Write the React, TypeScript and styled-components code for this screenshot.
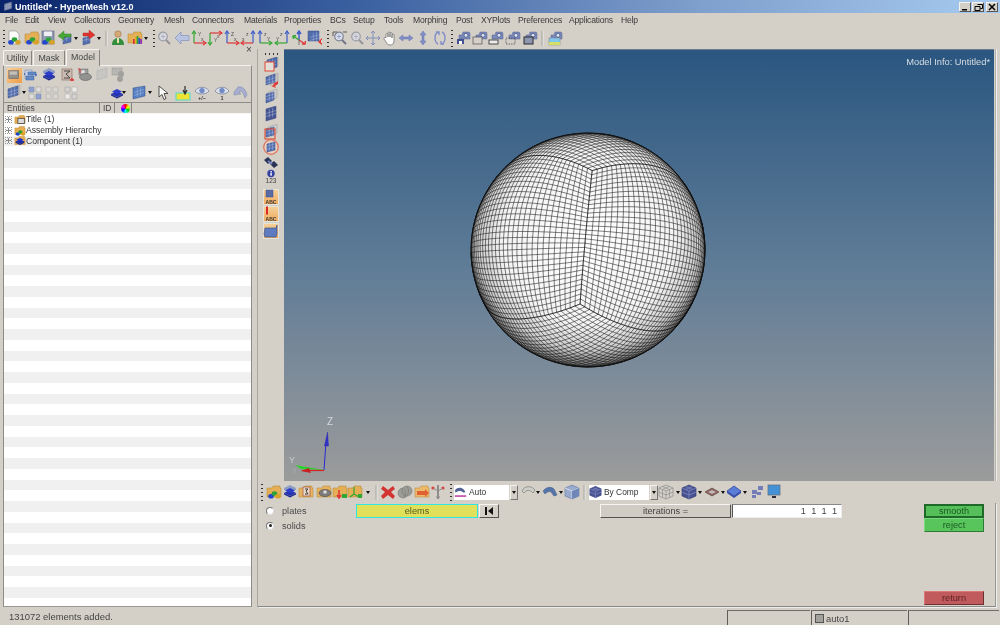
import React, { useMemo } from 'react';
import styled, { createGlobalStyle, css } from 'styled-components';

const Global = createGlobalStyle`
  html, body { margin: 0; padding: 0; background: #d4d0c8; }
  #root { width: 1000px; height: 625px; overflow: hidden; }
`;

const FONT = `"Liberation Sans", Arial, sans-serif`;

const Frame = styled.div`
  width: 1000px; height: 625px; display: flex; flex-direction: column;
  background: #d4d0c8; font-family: ${FONT}; color: #3a3a3a; overflow: hidden;
  filter: blur(0.3px);
`;
const TitleBar = styled.div`
  height: 13px; flex: none; display: flex; align-items: center; padding: 0 2px 0 2px;
  background: linear-gradient(90deg, #0a246a 0%, #3a5f9f 35%, #7f9fcc 70%, #a6caf0 100%);
`;
const TitleText = styled.span`
  color: #fff; font-weight: 700; font-size: 9px; margin-left: 1px; white-space: nowrap; flex: 1;
`;
const WinBtns = styled.div`display: flex; gap: 1px;`;
const WinBtn = styled.div<{ $gap?: number }>`
  width: 12px; height: 10px; margin-left: ${p => p.$gap ?? 0}px; background: #d4d0c8; box-sizing: border-box;
  border: 1px solid; border-color: #f4f2ee #555 #555 #f4f2ee; display: flex; align-items: center; justify-content: center;
  svg { display: block; }
`;
const MenuBar = styled.div`height: 14px; flex: none; display: flex; align-items: center; padding-left: 5px;`;
const MenuItem = styled.span<{ $w: number }>`
  flex: none; width: ${p => p.$w}px; font-size: 8.6px; letter-spacing: -0.2px; white-space: nowrap;
`;
const TopTools = styled.div`height: 22px; flex: none; display: flex; align-items: center;`;
const StripBox = styled.div<{ $pad: number }>`
  display: flex; height: 100%; flex: none; padding-left: ${p => p.$pad}px; align-items: center;
`;
const Slot = styled.span<{ $w: number }>`
  flex: none; width: ${p => p.$w}px; height: 100%; display: flex; align-items: center;
  & > * { flex: none; transform: translateX(-50%); }
`;
const Ico = styled.svg`width: 16px; height: 16px; display: block; opacity: 0.94;`;
const Drop = styled.i`
  width: 0; height: 0; border-left: 2px solid transparent; border-right: 2px solid transparent; border-top: 3px solid #111;
`;
const Grip = styled.i`
  width: 2px; height: 17px; background: repeating-linear-gradient(180deg, #333 0 1.5px, transparent 1.5px 4px);
`;
const Sep = styled.i`width: 1px; height: 15px; background: #a8a59e; box-shadow: 1px 0 0 #eee;`;

const Main = styled.div`flex: 1; display: flex; min-height: 0;`;
const LeftCol = styled.div`width: 257px; flex: none; display: flex; flex-direction: column; position: relative;`;
const CloseX = styled.span`position: absolute; left: 246px; top: -5px; font-size: 10px; color: #444; line-height: 12px;`;
const TabRow = styled.div`height: 16px; flex: none; display: flex; align-items: flex-end; padding-left: 3px; gap: 1px;`;
const Tab = styled.div<{ $w: number; $on?: boolean }>`
  width: ${p => p.$w}px; box-sizing: border-box; height: ${p => (p.$on ? 16 : 15)}px; flex: none;
  border: 1px solid #f6f5f1; border-bottom: 0; border-right-color: #86847e; border-radius: 2px 2px 0 0;
  font-size: 8.8px; text-align: center; line-height: 15px; color: #444;
  ${p => p.$on && css`margin-bottom: -1px; height: 17px; background: #d4d0c8; position: relative;`}
`;
const TabBody = styled.div`
  flex: 1; min-height: 0; width: 249px; margin-left: 3px; box-sizing: border-box; display: flex; flex-direction: column;
  border: 1px solid; border-color: #f4f2ee #8e8c86 #9a9892 #8e8c86;
`;
const ToolRow = styled.div<{ $h: number }>`height: ${p => p.$h}px; flex: none; display: flex; align-items: center;`;
const Hot = styled.span`
  width: 15px; height: 15px; background: linear-gradient(135deg, #f9d39b, #ef9b45); display: flex; align-items: center; justify-content: center;
  svg { width: 13px; height: 13px; }
`;
const HeadRow = styled.div`
  height: 12px; flex: none; display: flex; margin-top: 1px; border-top: 1px solid #8e8c86; border-bottom: 1px solid #f7f6f3; box-sizing: border-box;
`;
const HeadCell = styled.div<{ $w: number; $last?: boolean }>`
  width: ${p => p.$w}px; ${p => p.$last && 'flex: 1;'} box-sizing: border-box; border-right: 1px solid ${p => (p.$last ? 'transparent' : '#85837d')};
  font-size: 8.5px; line-height: 10px; padding-left: 3px; color: #444; display: flex; align-items: center;
`;
const Wheel = styled.i`
  width: 9px; height: 9px; border-radius: 50%; margin-left: 3px;
  background: conic-gradient(#f00, #ff0, #0c0, #0ff, #00f, #f0f, #f00);
`;
const Tree = styled.div`flex: 1; min-height: 0; overflow: hidden;`;
const TreeRow = styled.div<{ $alt: boolean }>`
  height: 10.75px; display: flex; align-items: center; padding-left: 1px; background: ${p => (p.$alt ? '#f0f0f0' : '#fff')};
  font-size: 8.6px; color: #333; white-space: nowrap; letter-spacing: -0.05px;
`;
const Expand = styled.i`
  width: 5px; height: 5px; border: 1px dotted #999; margin-right: 2px; position: relative; flex: none;
  &::before { content: ''; position: absolute; left: 0; right: 0; top: 2px; height: 1px; background: #888; }
  &::after { content: ''; position: absolute; top: 0; bottom: 0; left: 2px; width: 1px; background: #888; }
`;
const TreeIco = styled.svg`width: 12px; height: 11px; flex: none;`;

const RightCol = styled.div`flex: 1; min-width: 0; display: flex; flex-direction: column; border-left: 1px solid #aaa7a0;`;
const ViewRow = styled.div`height: 432px; flex: none; display: flex;`;
const VBar = styled.div<{ $pad: number }>`width: 26px; flex: none; display: flex; flex-direction: column; align-items: center; padding-top: ${p => p.$pad}px; box-sizing: border-box;`;
const VSlot = styled.span<{ $h: number }>`
  flex: none; height: ${p => p.$h}px; display: flex; justify-content: center;
  & > * { flex: none; transform: translateY(-50%); }
`;
const HDots = styled.i`width: 13px; height: 2px; background: repeating-linear-gradient(90deg, #333 0 1.5px, transparent 1.5px 4px);`;
const Tile = styled.span`
  width: 16px; height: 16px; background: linear-gradient(180deg, #f6d29c, #efa95a); display: block; box-shadow: inset 0 0 0 1px #e8e4da;
  svg { width: 16px; height: 16px; }
`;
const Viewport = styled.div`
  width: 710px; flex: none; position: relative; box-sizing: border-box; border-top: 1px solid #6d7f8f;
  background: linear-gradient(180deg, #2a5680 0%, #5f7c97 50%, #9b9b9b 100%);
`;
const ModelInfo = styled.span`
  position: absolute; right: 4px; top: 7px; font-size: 9.3px; color: #d6dde3;
`;
const SphereSvg = styled.svg`position: absolute; left: 184px; top: 80px; width: 240px; height: 240px;`;
const TriadSvg = styled.svg`position: absolute; left: 4px; top: 364px; width: 50px; height: 66px;`;
const EdgeLine = styled.div`width: 1px; margin-left: 1px; background: #b5b2ab; box-shadow: 1px 0 0 #eee;`;

const BottomTools = styled.div`height: 22px; flex: none; display: flex; align-items: center;`;
const Combo = styled.div<{ $w: number }>`
  flex: none; width: ${p => p.$w}px; height: 15px; display: flex; align-items: center;
`;
const ComboField = styled.div`
  flex: 1; height: 100%; background: #fff; display: flex; align-items: center; gap: 2px; font-size: 8.4px; color: #333;
  svg { width: 13px; height: 14px; }
`;
const ComboArrow = styled.div`
  width: 8px; height: 100%; display: flex; align-items: center; justify-content: center; margin-left: 1px;
  border: 1px solid; box-sizing: border-box; border-color: #f4f2ee #777 #777 #f4f2ee;
`;
const Panel = styled.div`
  flex: 1; min-height: 0; margin: 0 4px 0 0; display: flex; padding-top: 1px; box-sizing: border-box;
  border-right: 1px solid #9a9892; border-bottom: 1px solid #8a8882; box-shadow: 1px 1px 0 #eee;
`;
const RadioCol = styled.div`width: 98px; flex: none; display: flex; flex-direction: column; padding: 1px 0 0 8px; box-sizing: border-box; gap: 2.5px;`;
const RadioRow = styled.label`display: flex; align-items: center; height: 12px; gap: 8px; font-size: 9.2px; color: #4a4a4a;`;
const Dot = styled.i<{ $on?: boolean }>`
  width: 6px; height: 6px; border-radius: 50%; background: #fff; border: 1px solid; border-color: #777 #ddd #ddd #777; display: flex; align-items: center; justify-content: center;
  ${p => p.$on && css`&::after { content: ''; width: 3px; height: 3px; border-radius: 50%; background: #222; }`}
`;
const Bevel = css`
  height: 14px; box-sizing: border-box; border: 1px solid; border-color: #f6f5f1 #55534f #55534f #f6f5f1;
  display: flex; align-items: center; justify-content: center; font-size: 9.2px; color: #444;
`;
const ElemsBtn = styled.div`
  width: 122px; height: 14px; flex: none; box-sizing: border-box; border: 1px solid #2fe6e2; background: #e0e05a;
  display: flex; align-items: center; justify-content: center; font-size: 9.2px; color: #555a20;
`;
const FirstBtn = styled.div`${Bevel}; width: 20px; flex: none; margin-left: 1px; margin-right: 101px;`;
const IterBtn = styled.div`${Bevel}; width: 131px; flex: none; background: #d0ccc4;`;
const ValueField = styled.div`
  width: 110px; height: 14px; flex: none; margin-left: 1px; box-sizing: border-box; background: #fff; border: 1px solid #eee; border-left-color: #555; border-top-color: #888;
  display: flex; align-items: center; justify-content: flex-end; padding-right: 4px; font-size: 9.2px; color: #444; word-spacing: 2.7px;
`;
const ActionCol = styled.div`width: 60px; flex: none; margin-left: 82px; display: flex; flex-direction: column;`;
const Action = styled.div<{ $tone: 'on' | 'off' | 'red'; $push?: boolean }>`
  height: 14px; box-sizing: border-box; display: flex; align-items: center; justify-content: center; font-size: 9.2px;
  ${p => p.$push && 'margin-top: auto; margin-bottom: 1px;'}
  ${p => p.$tone === 'red' && 'background: #c05a5c; color: #5a2226; border: 1px solid; border-color: #d77 #6d3033 #6d3033 #d77;'}
  ${p => p.$tone === 'off' && 'background: #58c45c; color: #1d5a24; border: 1px solid; border-color: #7ad97e #2f7a35 #2f7a35 #7ad97e;'}
  ${p => p.$tone === 'on' && 'background: #55c05a; color: #1b5a22; border: 2px solid #1f6a28; margin-bottom: 0;'}
`;
const Status = styled.div`height: 18px; flex: none; display: flex; align-items: flex-end;`;
const StatusMsg = styled.div`flex: 1; align-self: center; padding-left: 9px; font-size: 9.45px; color: #444;`;
const StatusCell = styled.div<{ $w: number }>`
  width: ${p => p.$w}px; height: 15px; flex: none; box-sizing: border-box; border-left: 1px solid #5f5d58; border-top: 1px solid #6f6d68; margin-right: 1px;
  display: flex; align-items: center; gap: 2px; padding-left: 3px; font-size: 9.4px; color: #444;
`;
const Swatch = styled.i`width: 7px; height: 7px; background: #a3a19c; border: 1px solid #555;`;

/* ---------- drawings ---------- */
const GN = '#2aa52c', RD = '#e03030', BL = '#3355c8', MB = '#4a67ad';

const Balls = () => (
  <g>
    <ellipse cx="5" cy="12.3" rx="2.8" ry="2.3" fill="#1b3fd0" />
    <ellipse cx="8.5" cy="9.5" rx="2.8" ry="2.3" fill="#20a030" />
    <ellipse cx="12" cy="12.3" rx="2.8" ry="2.3" fill="#d8a020" />
  </g>
);
const Folder = ({ c = '#e6ad4e' }: { c?: string }) => (
  <path d="M1 4h5l1-2h7v2h1v9H1z" fill={c} stroke="#b98b3a" strokeWidth=".6" />
);
const MeshP = ({ d = 'M3 4l10-3v9L3 13z', f = MB, back = false }: { d?: string; f?: string; back?: boolean }) => (
  <g>
    {back && <path d="M6 3l9-3v9l-9 3z" fill="#c5c3bf" stroke="#999" strokeWidth=".5" />}
    <path d={d} fill={f} stroke="#33477e" strokeWidth=".5" />
    <path d="M6.3 3v9M9.6 2v9M3 7.5l10-3M3 10.5l10-3" stroke="#a9b8dc" strokeWidth=".5" fill="none" />
  </g>
);
const Disc = ({ c = '#2233cc' }: { c?: string }) => (
  <g>
    <path d="M8 6l6 3-6 3-6-3z" fill="#1a2bb0" />
    <path d="M2 9v1.5l6 3 6-3V9l-6 3z" fill="#101f8a" />
    <path d="M8 4l5 2.6-5 2.6L3 6.6z" fill={c} />
  </g>
);
const Mag = () => (
  <g>
    <circle cx="7" cy="6.5" r="4.3" fill="#d8deea" stroke="#7a7f92" strokeWidth="1.2" />
    <path d="M10 10l4 4" stroke="#6b6f80" strokeWidth="2" />
    <path d="M5 6.5h4M7 4.5v4" stroke="#8a93c0" strokeWidth=".8" />
  </g>
);
const Axis = ({ vc, hc, vx = 3, hy = 13, vUp = true, hRight = true, lv, lh }: {
  vc: string; hc: string; vx?: number; hy?: number; vUp?: boolean; hRight?: boolean; lv: string; lh: string;
}) => {
  const vEnd = vUp ? 1 : 15;
  const hEnd = hRight ? 15 : 1;
  const hStart = vx === 3 ? 3 : 13;
  return (
    <g fill="none" strokeWidth="1.2">
      <path d={`M${vx} ${hy}V${vEnd}`} stroke={vc} />
      <path d={`M${vx - 2} ${vEnd + (vUp ? 3 : -3)}L${vx} ${vEnd}l2 ${vUp ? 3 : -3}`} stroke={vc} />
      <path d={`M${hStart} ${hy}H${hEnd}`} stroke={hc} />
      <path d={`M${hEnd + (hRight ? -3 : 3)} ${hy - 2}L${hEnd} ${hy}l${hRight ? -3 : 3} 2`} stroke={hc} />
      <text x={vx === 3 ? 7 : 6} y={hy > 8 ? 6 : 12} fontSize="5" fill="#444" stroke="none" fontFamily={FONT}>{lv}</text>
      <text x={vx === 3 ? 10 : 2} y={hy > 8 ? 11 : 8} fontSize="5" fill="#444" stroke="none" fontFamily={FONT}>{lh}</text>
    </g>
  );
};
const Cam = ({ children }: { children?: React.ReactNode }) => (
  <g>
    <path d="M4 5h3l1-3h6l1 1v6H4z" fill="#7484b8" stroke="#4e5c8e" strokeWidth=".5" />
    <circle cx="11" cy="5.3" r="1.9" fill="#dfe6f6" stroke="#3e4c80" strokeWidth=".7" />
    {children}
  </g>
);
const Eye = ({ label }: { label: string }) => (
  <g>
    <path d="M1 6c3-5 11-5 14 0-3 4-11 4-14 0z" fill="#dfe4ee" stroke="#6a7390" strokeWidth=".7" />
    <circle cx="8" cy="5.6" r="2.7" fill="#6c87c6" />
    <text x="8" y="14.5" textAnchor="middle" fontSize="5.5" fontFamily={FONT} fontWeight="700" fill="#333">{label}</text>
  </g>
);

const ICONS: Record<string, React.ReactNode> = {
  new: <g><path d="M3 1h7l3 3v10H3z" fill="#fff" stroke="#8a8a8a" strokeWidth=".6" /><Balls /></g>,
  folder: <g><Folder /><Balls /></g>,
  save: <g><rect x="2" y="1" width="12" height="13" fill="#8c96b0" stroke="#505a78" strokeWidth=".6" /><rect x="4" y="1.5" width="8" height="4.5" fill="#eef0f5" /><Balls /></g>,
  arrowG: <g><MeshP d="M6 6l8-2v8l-8 2z" /><path d="M1 6l6-5v3h7v3H7v3z" fill="#3ea52c" stroke="#256c1c" strokeWidth=".4" /></g>,
  arrowR: <g><MeshP d="M3 8l7-2v7l-7 2z" /><path d="M15 5L9 0v3H3v3h6v3z" fill="#e22a26" stroke="#9c1816" strokeWidth=".4" /></g>,
  user: <g><circle cx="8" cy="4" r="3.2" fill="#d8a870" stroke="#87623a" strokeWidth=".5" /><path d="M2 15c0-5 3-7 6-7s6 2 6 7z" fill="#2c8a36" /><path d="M7 8h2v5H7z" fill="#e9e3b0" /></g>,
  rainbow: <g><Folder /><path d="M6 14V9h1.8v5z" fill="#e02828" /><path d="M7.8 14V7H9.6v7z" fill="#e0b020" /><path d="M9.6 14V6h1.8v8z" fill="#22a030" /><path d="M11.4 14V8h1.8v6z" fill="#2244cc" /><path d="M13.2 14V9h1.8v5z" fill="#9030b0" /></g>,
  mag: <Mag />,
  magDim: <g opacity=".65"><Mag /></g>,
  magBox: <g><path d="M1 2h4M1 2v4M15 2h-4" stroke="#555" fill="none" /><Mag /></g>,
  left: <path d="M1 8l6-6v3.5h8v5H7V14z" fill="#b8c4e4" stroke="#7e8ebc" strokeWidth=".7" />,
  ax1: <Axis vc={GN} hc={RD} lv="Y" lh="x" />,
  ax2: <Axis vc={GN} hc={RD} hy={3} vUp={false} lv="Y" lh="x" />,
  ax3: <Axis vc={BL} hc={RD} lv="Z" lh="x" />,
  ax4: <Axis vc={BL} hc={RD} vx={13} hRight={false} lv="z" lh="x" />,
  ax5: <Axis vc={BL} hc={GN} lv="z" lh="Y" />,
  ax6: <Axis vc={BL} hc={GN} vx={13} hRight={false} lv="z" lh="Y" />,
  ax7: (
    <g fill="none" strokeWidth="1.4">
      <path d="M8 10V1M6 4l2-3 2 3" stroke={BL} />
      <path d="M8 10l-6-4M2.4 9L2 6l3-.5" stroke={GN} />
      <path d="M8 10l6 4M14.5 11l-.5 3-3 0" stroke={RD} />
      <path d="M8 10v5" stroke="#555" strokeWidth=".8" />
    </g>
  ),
  viewMesh: <g><MeshP d="M1 1h11v10H1z" /><path d="M15 8l-4 4 4 3v-2h-1v-3h1z" fill={RD} /></g>,
  cross: <path d="M8 1v14M1 8h14M6 3l2-2 2 2M6 13l2 2 2-2M3 6L1 8l2 2M13 6l2 2-2 2" fill="none" stroke="#7f8abc" strokeWidth="1" />,
  hand: <path d="M4 8V4.500a1 1 0 012 0V7 3a1 1 0 012 0v4-3.500a1 1 0 012 0V8 5a1 1 0 012 0v6c0 3-2 4-4 4s-3-1-4-3L2 9a1 1 0 012-1z" fill="#fff" stroke="#6e6e6e" strokeWidth=".8" />,
  horiz: <path d="M1 8l4-3v2h6V5l4 3-4 3V9H5v2z" fill="#7c8ac8" stroke="#5f6cae" strokeWidth=".5" />,
  vert: <path d="M8 1l3 4H9v6h2l-3 4-3-4h2V5H5z" fill="#7c8ac8" stroke="#5f6cae" strokeWidth=".5" />,
  rotate: <path d="M6 2C2 4 2 12 6 14M10 2c4 2 4 10 0 12M4 2h3v3M12 14H9v-3" fill="none" stroke="#7c8ac8" strokeWidth="1.4" />,
  cam1: <Cam><rect x="2" y="9" width="7" height="5" fill="#3a4a8c" /><rect x="4" y="11" width="3" height="3" fill="#fff" /></Cam>,
  cam2: <Cam><rect x="1" y="7" width="9" height="7" fill="#d4d0c8" stroke="#4a4a4a" strokeWidth=".7" /></Cam>,
  cam3: <Cam><rect x="1" y="10" width="9" height="4" fill="#eee" stroke="#333" strokeWidth=".9" /></Cam>,
  cam4: <Cam><rect x="1" y="8" width="9" height="6" fill="none" stroke="#333" strokeWidth=".7" strokeDasharray="1.5 1" /></Cam>,
  cam5: <Cam><rect x="2" y="7" width="9" height="7" fill="#8a93b0" stroke="#222" strokeWidth="1" /></Cam>,
  camImg: <Cam><rect x="2" y="8" width="11" height="7" fill="#7ec8f0" stroke="#777" strokeWidth=".5" /><rect x="2" y="12" width="11" height="3" fill="#d4e060" /></Cam>,
  panelHot: <g><rect x="1" y="2" width="12" height="10" fill="#8e8e8e" stroke="#555" strokeWidth=".6" /><rect x="2" y="3" width="9" height="4" fill="#c0c0c0" /></g>,
  assy: <g><rect x="2" y="3" width="7" height="9" fill="#c5d0e6" stroke="#7888aa" strokeWidth=".6" /><path d="M5 5h8v3H5zM3 9h8v4H3z" fill="#5b86c6" stroke="#3a5aa0" strokeWidth=".5" /><path d="M12 7l2 1-2 1M2 6l-1 1 1 1" stroke="#3a6ac0" fill="none" /></g>,
  comp: <g><path d="M8 1l6 3v2H2V4z" fill="#8a9ac4" /><Disc /></g>,
  title2: <g><rect x="3" y="2" width="10" height="11" fill="#c8b8b0" stroke="#8a6050" strokeWidth=".6" /><path d="M5 4h6l-4 3 4 4H5" fill="none" stroke="#333" strokeWidth=".9" /><path d="M13 11v3M11 13h4" stroke={RD} strokeWidth="1.4" /></g>,
  stack: <g><rect x="2" y="2" width="9" height="6" fill="#9a9a9a" stroke="#666" strokeWidth=".5" /><circle cx="6" cy="5" r="2" fill="#ddd" /><ellipse cx="8.500" cy="10" rx="6" ry="3.500" fill="#8f8f8f" stroke="#555" strokeWidth=".6" /><path d="M1 2h2v4" stroke={RD} fill="none" /></g>,
  dimMesh: <g opacity=".3"><MeshP f="#aaa" /></g>,
  stackDim: <g opacity=".7"><rect x="2" y="1" width="10" height="7" fill="#aaa" stroke="#777" strokeWidth=".5" /><circle cx="11" cy="7" r="3" fill="#888" /><circle cx="10" cy="12" r="3" fill="#888" /></g>,
  meshBack: <MeshP back />,
  frame1: <g opacity=".5"><path d="M2 2h5v5H2zM9 2h5v5H9zM2 9h5v5H2zM9 9h5v5H9z" fill="#ddd" stroke="#888" strokeWidth=".6" /></g>,
  frame2: <g opacity=".85"><path d="M2 2h5v5H2zM9 9h5v5H9z" fill="#8097d0" stroke="#5a70a8" strokeWidth=".5" /><path d="M9 2h5v5H9zM2 9h5v5H2z" fill="#e2e2e2" stroke="#888" strokeWidth=".5" /></g>,
  frame3: <g opacity=".8"><path d="M2 2h5v5H2zM9 9h5v5H9z" fill="#d2d2d2" stroke="#888" strokeWidth=".5" /><path d="M9 2h5v5H9zM2 9h5v5H2z" fill="#f2f2f2" stroke="#999" strokeWidth=".5" /></g>,
  disc: <Disc />,
  mesh: <MeshP d="M2 3l12-2v10L2 14z" f="#4c79c2" />,
  cursor: <path d="M4 1v11l3-2.500 2 5 2-1-2-5h4z" fill="#fff" stroke="#333" strokeWidth=".9" />,
  yellow: <g><rect x="1" y="8" width="14" height="7" fill="#efe62a" stroke="#45d8d4" strokeWidth="1" /><path d="M10 1v8M8 5l2 4 2-4" stroke="#222" fill="none" strokeWidth="1.2" /></g>,
  eyePM: <Eye label="+/−" />,
  eye1: <Eye label="1" />,
  undo: <path d="M2 7l4-5c5-1 8 3 9 8l-2 3-2-5c-1-2-3-2-4-1l2 2-7 1z" fill="#a4abd0" stroke="#7880a8" strokeWidth=".5" />,
  v1: <g><MeshP back d="M4 3l10-3v10L4 13z" /><rect x="2" y="5" width="9" height="9" fill="#e4e0d8" stroke="#e0432a" strokeWidth="1" /></g>,
  v2: <g><MeshP back d="M3 4l9-3v8l-9 3z" /><path d="M15 8l-5 3 1 1-3 1 5 2-1-2 3-2z" fill={RD} /></g>,
  v3: <g><path d="M5 3l9-3v9L5 12z" fill="#ccc" stroke="#999" strokeWidth=".5" /><MeshP d="M3 5l8-2v8l-8 3z" /></g>,
  v4: <MeshP back={false} d="M3 3l10-3v12L3 15z" f="#3d4d8e" />,
  v5: <g><path d="M5 3l9-3v9L5 12z" fill="#ccc" stroke="#999" strokeWidth=".5" /><MeshP d="M3 5l8-2v8l-8 2z" /><rect x="2" y="5" width="10" height="10" fill="none" stroke="#e0432a" strokeWidth="1.1" /></g>,
  v6: <g><circle cx="8" cy="8" r="7.300" fill="#e8d0c4" stroke="#e06a50" strokeWidth="1.2" /><MeshP d="M4 5l8-2v8l-8 2z" /></g>,
  bino: <g><path d="M1 5l4-3 4 4-4 3zM7 9l4-3 4 4-4 3z" fill="#1f2a52" /><path d="M5 6l4 3" stroke="#6b7bb6" strokeWidth="2" /></g>,
  tabc: <g><rect x="3" y="1" width="7" height="7" fill="#4f66a8" stroke="#334a90" strokeWidth=".5" /><text x="8" y="14.500" textAnchor="middle" fontSize="5" fontWeight="700" fontFamily={FONT} fill="#333">ABC</text></g>,
  tabc2: <g><rect x="3" y="0.500" width="2" height="8" fill="#d92020" /><text x="8" y="14.500" textAnchor="middle" fontSize="5" fontWeight="700" fontFamily={FONT} fill="#333">ABC</text></g>,
  tbox: <path d="M2 5h11l1-3v9l-1 3H2l-1-3z" fill="#5578c4" stroke="#35508e" strokeWidth=".7" />,
  tri: <g><Folder /><path d="M7 3v7l5 3M7 10l-4 3" stroke={GN} strokeWidth="1.2" fill="none" /><rect x="11" y="10" width="4" height="4" fill={GN} /></g>,
  folderT: <g><Folder c="#eab25a" /><rect x="5" y="3" width="7" height="9" fill="#e8d8c8" stroke="#a04a3a" strokeWidth=".7" /><path d="M7 5h3l-2 2 2 3H7" fill="none" stroke="#333" /></g>,
  folderS: <g><Folder c="#eab25a" /><ellipse cx="9" cy="9" rx="6" ry="3.600" fill="#777" stroke="#333" strokeWidth=".5" /><circle cx="9" cy="8" r="1.800" fill="#ddd" /></g>,
  folderR: <g><Folder /><path d="M7 6v7M5 11l2 3 2-3" stroke={RD} strokeWidth="1.6" fill="none" /><rect x="10" y="10" width="5" height="4" fill={GN} /></g>,
  x: <path d="M3 2l5 4 5-4 2 3-4 3 4 4-2 3-5-4-5 4-2-3 4-4-4-3z" fill="#d32a2a" />,
  gears: <g fill="#9a9a96" stroke="#6e6e6a" strokeWidth=".6"><ellipse cx="6" cy="9" rx="5" ry="5" /><ellipse cx="10" cy="7" rx="5" ry="5" /><path d="M7 5c2 2 2 6 0 8M10 3c2 2 2 6 0 8" fill="none" /></g>,
  folderF: <g><Folder c="#efb866" /><path d="M3 7h8v-2l4 4-4 4v-2H3z" fill="#e05a28" /></g>,
  split: <g><path d="M8 1v14" stroke="#444" strokeWidth="1" /><circle cx="3" cy="4" r="1.600" fill={RD} /><circle cx="13" cy="4" r="1.600" fill={RD} /><path d="M3 4l5 3 5-3M6 13h4" stroke="#888" fill="none" /></g>,
  bolt: <g><path d="M2 7c2-5 9-6 13-1l-2 3c-3-4-7-3-9 0z" fill="#d0d0cc" stroke="#777" strokeWidth=".7" /></g>,
  bolt2: <g><path d="M1 7c3-4 8-5 11-2l3 6-3 1-3-4c-2-1-4 0-6 2z" fill="#4d6fa8" stroke="#34507e" strokeWidth=".5" /></g>,
  box: <g><path d="M8 1l7 3v8l-7 3-7-3V4z" fill="#95a8ce" stroke="#60709c" strokeWidth=".6" /><path d="M1 4l7 3 7-3M8 7v8" stroke="#e8ecf6" fill="none" strokeWidth=".8" /><path d="M8 7l7-3v8l-7 3z" fill="#6882b8" /></g>,
  wire: <g fill="none" stroke="#8a8a8a" strokeWidth=".7"><path d="M8 1l7 3v8l-7 3-7-3V4zM1 4l7 3 7-3M8 7v8M4.500 2.500l7 3v8M11.500 2.500l-7 3v8M1 8l7 3 7-3" /></g>,
  solid: <g><path d="M8 1l7 3v8l-7 3-7-3V4z" fill="#3f4a8e" stroke="#20285e" strokeWidth=".6" /><path d="M1 4l7 3 7-3M8 7v8M4.500 2.500l7 3M11.500 2.500l-7 3M1 8l7 3 7-3" stroke="#8c98d0" fill="none" strokeWidth=".6" /></g>,
  plane: <g><path d="M1 8l7-4 7 4-7 4z" fill="#8c5850" stroke="#4a3a3a" strokeWidth=".6" /><path d="M4 8l4-2 4 2-4 2z" fill="#bbb" /></g>,
  discL: <g><path d="M8 2l7 5-7 5-7-5z" fill="#5278d8" stroke="#2a3fa0" strokeWidth=".8" /><path d="M1 7v2l7 5 7-5V7l-7 5z" fill="#2d43a6" /></g>,
  dots: <g fill="#6c78b8"><rect x="9" y="2" width="5" height="4" /><rect x="3" y="6" width="5" height="4" /><rect x="8" y="8" width="4" height="3" /><rect x="3" y="11" width="4" height="3" /></g>,
  monitor: <g><rect x="2" y="1" width="12" height="10" fill="#3a8fd8" stroke="#5c6a80" strokeWidth=".8" /><path d="M6 12h4v2H6z" fill="#223" /></g>,
};

const Icon = ({ k }: { k: string }) => <Ico viewBox="0 0 16 16">{ICONS[k]}</Ico>;

const renderKind = (k: string) => {
  if (k === 'drop') return <Drop />;
  if (k === 'grip') return <Grip />;
  if (k === 'sep') return <Sep />;
  return <Icon k={k} />;
};

type Item = [number, string];
const Strip = ({ origin, end, items }: { origin: number; end: number; items: Item[] }) => (
  <StripBox $pad={items[0][0] - origin}>
    {items.map(([c, k], i) => (
      <Slot key={i} $w={(items[i + 1]?.[0] ?? end) - c}>{renderKind(k)}</Slot>
    ))}
  </StripBox>
);

const MENU: [string, number][] = [
  ['File', 20], ['Edit', 23], ['View', 26], ['Collectors', 44], ['Geometry', 46], ['Mesh', 28], ['Connectors', 52],
  ['Materials', 40], ['Properties', 46], ['BCs', 23], ['Setup', 31], ['Tools', 29], ['Morphing', 43], ['Post', 25],
  ['XYPlots', 37], ['Preferences', 51], ['Applications', 52], ['Help', 20],
];

const TOP: Item[] = [
  [4, 'grip'], [14, 'new'], [32, 'folder'], [48, 'save'], [65, 'arrowG'], [76, 'drop'], [88, 'arrowR'], [99, 'drop'], [106, 'sep'],
  [118, 'user'], [135, 'rainbow'], [146, 'drop'], [154, 'grip'], [164, 'magDim'], [182, 'left'], [199, 'ax1'], [215, 'ax2'], [232, 'ax3'],
  [248, 'ax4'], [265, 'ax5'], [282, 'ax6'], [299, 'ax7'], [315, 'viewMesh'], [328, 'grip'], [340, 'magBox'], [357, 'magDim'], [373, 'cross'],
  [390, 'hand'], [406, 'horiz'], [423, 'vert'], [440, 'rotate'], [452, 'grip'], [463, 'cam1'], [480, 'cam2'], [496, 'cam3'], [513, 'cam4'],
  [530, 'cam5'], [542, 'sep'], [555, 'camImg'],
];
const ROW1: Item[] = [[31, 'assy'], [49, 'comp'], [67, 'title2'], [85, 'stack'], [102, 'dimMesh'], [118, 'stackDim']];
const ROW2: Item[] = [
  [13, 'meshBack'], [24, 'drop'], [35, 'frame2'], [52, 'frame1'], [71, 'frame3'], [117, 'disc'], [124, 'drop'], [139, 'mesh'], [150, 'drop'],
  [163, 'cursor'], [183, 'yellow'], [202, 'eyePM'], [222, 'eye1'], [240, 'undo'],
];
const B1: Item[] = [
  [262, 'grip'], [274, 'folder'], [290, 'comp'], [306, 'folderT'], [324, 'folderS'], [340, 'folderR'], [355, 'tri'], [368, 'drop'], [376, 'sep'],
  [388, 'x'], [405, 'gears'], [422, 'folderF'], [438, 'split'], [451, 'grip'],
];
const B2: Item[] = [[528, 'bolt'], [538, 'drop'], [550, 'bolt2'], [561, 'drop'], [572, 'box'], [584, 'sep']];
const B3: Item[] = [
  [666, 'wire'], [678, 'drop'], [689, 'solid'], [700, 'drop'], [712, 'plane'], [723, 'drop'], [734, 'discL'], [745, 'drop'], [757, 'dots'], [774, 'monitor'],
];
const VERT: { c: number; k: string; tile?: boolean }[] = [
  { c: 65, k: 'v1' }, { c: 81, k: 'v2' }, { c: 97, k: 'v3' }, { c: 114, k: 'v4' }, { c: 132, k: 'v5' }, { c: 147, k: 'v6' }, { c: 163, k: 'bino' },
];

/* cube-sphere wireframe */
const buildSphere = (N: number, R: number, cx: number, cy: number) => {
  const rad = Math.PI / 180;
  const yaw = (45 + 1.8) * rad, pitch = -7.5 * rad, roll = -5.2 * rad;
  const rot = (p: number[]) => {
    let [x, y, z] = p;
    let a = x * Math.cos(yaw) - z * Math.sin(yaw);
    let b = x * Math.sin(yaw) + z * Math.cos(yaw);
    x = a; z = b;
    a = y * Math.cos(pitch) - z * Math.sin(pitch);
    b = y * Math.sin(pitch) + z * Math.cos(pitch);
    y = a; z = b;
    a = x * Math.cos(roll) - y * Math.sin(roll);
    b = x * Math.sin(roll) + y * Math.cos(roll);
    return [a, b, z];
  };
  const faces: ((u: number, v: number) => number[])[] = [
    (u, v) => [1, u, v], (u, v) => [-1, u, v], (u, v) => [u, 1, v], (u, v) => [u, -1, v], (u, v) => [u, v, 1], (u, v) => [u, v, -1],
  ];
  const t = (i: number) => Math.tan((i / N * 2 - 1) * Math.PI / 4);
  let d = '';
  const line = (fn: (s: number) => number[]) => {
    let pen = false;
    for (let s = 0; s <= N; s++) {
      const p = fn(s);
      const l = Math.hypot(p[0], p[1], p[2]);
      const q = rot([p[0] / l, p[1] / l, p[2] / l]);
      if (q[2] < -0.02) { pen = false; continue; }
      const X = (cx + q[0] * R).toFixed(1), Y = (cy - q[1] * R).toFixed(1);
      d += `${pen ? 'L' : 'M'}${X} ${Y}`;
      pen = true;
    }
  };
  for (const f of faces) {
    for (let i = 0; i <= N; i++) {
      line(s => f(t(i), t(s)));
      line(s => f(t(s), t(i)));
    }
  }
  return d;
};

const Sphere = () => {
  const d = useMemo(() => buildSphere(30, 117, 120, 120), []);
  return (
    <SphereSvg viewBox="0 0 240 240">
      <defs>
        <radialGradient id="sph" cx="50%" cy="45%" r="52%">
          <stop offset="0%" stopColor="#ffffff" />
          <stop offset="70%" stopColor="#f4f4f4" />
          <stop offset="92%" stopColor="#cccccc" />
          <stop offset="100%" stopColor="#8e8e8e" />
        </radialGradient>
      </defs>
      <circle cx="120" cy="120" r="117" fill="url(#sph)" />
      <path d={d} fill="none" stroke="#000" strokeWidth="0.58" strokeOpacity="0.85" />
      <circle cx="120" cy="120" r="117" fill="none" stroke="#111" strokeWidth="1" />
    </SphereSvg>
  );
};

export default function App() {
  const stripes = Array.from({ length: 46 }, (_, i) => i);
  const treeLabels: [string, string][] = [['Title (1)', 'title'], ['Assembly Hierarchy', 'assy'], ['Component (1)', 'comp']];
  return (
    <Frame>
      <Global />
      <TitleBar>
        <Ico viewBox="0 0 16 16" style={{ width: 12, height: 12 }}><MeshP f="#8b93a8" /></Ico>
        <TitleText>Untitled* - HyperMesh v12.0</TitleText>
        <WinBtns>
          <WinBtn><svg width="8" height="8"><rect x="1" y="6" width="5" height="1.500" fill="#000" /></svg></WinBtn>
          <WinBtn><svg width="9" height="8"><path d="M3.500 1.500h5v4h-2M1 3.500h5v4H1z" fill="none" stroke="#000" /></svg></WinBtn>
          <WinBtn $gap={1}><svg width="8" height="8"><path d="M1 1l6 6M7 1L1 7" stroke="#000" strokeWidth="1.500" /></svg></WinBtn>
        </WinBtns>
      </TitleBar>
      <MenuBar>
        {MENU.map(([label, w]) => <MenuItem key={label} $w={w}>{label}</MenuItem>)}
      </MenuBar>
      <TopTools><Strip origin={0} end={570} items={TOP} /></TopTools>
      <Main>
        <LeftCol>
          <CloseX>×</CloseX>
          <TabRow>
            <Tab $w={29}>Utility</Tab>
            <Tab $w={32}>Mask</Tab>
            <Tab $w={34} $on>Model</Tab>
          </TabRow>
          <TabBody>
            <ToolRow $h={18}>
              <StripBox $pad={3}>
                <Slot $w={24}><Hot style={{ transform: 'none' }}><Ico viewBox="0 0 16 16">{ICONS.panelHot}</Ico></Hot></Slot>
              </StripBox>
              <Strip origin={31} end={130} items={ROW1} />
            </ToolRow>
            <ToolRow $h={17}><Strip origin={4} end={250} items={ROW2} /></ToolRow>
            <HeadRow>
              <HeadCell $w={96}>Entities</HeadCell>
              <HeadCell $w={15}>ID</HeadCell>
              <HeadCell $w={17}><Wheel /></HeadCell>
              <HeadCell $w={0} $last />
            </HeadRow>
            <Tree>
              {stripes.map(i => {
                const lab = treeLabels[i];
                return (
                  <TreeRow key={i} $alt={i % 2 === 0 && i > 0}>
                    {lab && (
                      <>
                        <Expand />
                        <TreeIco viewBox="0 0 16 15">
                          <Folder />
                          {lab[1] === 'title' && <path d="M5 6h9v7H5z" fill="#ddd" stroke="#333" strokeWidth="1" />}
                          {lab[1] === 'assy' && <Balls />}
                          {lab[1] === 'comp' && <Disc />}
                        </TreeIco>
                        {lab[0]}
                      </>
                    )}
                  </TreeRow>
                );
              })}
            </Tree>
          </TabBody>
        </LeftCol>
        <RightCol>
          <ViewRow>
            <VBar $pad={4}>
              <VSlot $h={12}><HDots style={{ transform: 'none' }} /></VSlot>
              {VERT.map((v, i) => (
                <VSlot key={v.k} $h={(VERT[i + 1]?.c ?? 178) - v.c}><Icon k={v.k} /></VSlot>
              ))}
              <VSlot $h={19}>
                <Ico viewBox="0 0 16 20" style={{ height: 20 }}>
                  <circle cx="8" cy="5.500" r="3.700" fill="#2a3aa0" />
                  <rect x="7.400" y="4.500" width="1.400" height="3.200" fill="#fff" />
                  <rect x="7.400" y="2.900" width="1.400" height="1.100" fill="#fff" />
                  <text x="8" y="15" textAnchor="middle" fontSize="6.500" fontFamily={FONT} fill="#333">123</text>
                </Ico>
              </VSlot>
              <VSlot $h={17}><Tile><Ico viewBox="0 0 16 16">{ICONS.tabc}</Ico></Tile></VSlot>
              <VSlot $h={17}><Tile><Ico viewBox="0 0 16 16">{ICONS.tabc2}</Ico></Tile></VSlot>
              <VSlot $h={17}><Tile><Ico viewBox="0 0 16 16">{ICONS.tbox}</Ico></Tile></VSlot>
            </VBar>
            <Viewport>
              <ModelInfo>Model Info: Untitled*</ModelInfo>
              <Sphere />
              <TriadSvg viewBox="0 0 50 66">
                <path d="M36 56L38 28" stroke="#2a2ad0" strokeWidth="1" fill="none" />
                <path d="M39.500 18l-3 14h4z" fill="#3232c8" stroke="#2222a8" strokeWidth=".4" />
                <path d="M36 56L7 51l6 4z" fill="#2cd22c" />
                <path d="M36 56.500H14" stroke="#d82020" strokeWidth="1.200" />
                <path d="M13 57l8-3 2 5z" fill="#c82020" />
                <text x="39" y="11" fontSize="10" fill="#d5dade" fontFamily={FONT}>Z</text>
                <text x="1" y="49" fontSize="9" fill="#c8ccd0" fontFamily={FONT}>Y</text>
                <text x="4" y="59" fontSize="7" fill="#a8acb0" fontFamily={FONT}>X</text>
              </TriadSvg>
            </Viewport>
            <EdgeLine />
          </ViewRow>
          <BottomTools>
            <Strip origin={258} end={454} items={B1} />
            <Combo $w={64}>
              <ComboField>
                <Ico viewBox="0 0 16 16"><path d="M1 6c3-4 8-4 11-1l2 3-2 1c-3-3-7-3-10 0z" fill="#4a5a90" /><rect x="1" y="12" width="14" height="2" fill="#c040a0" /></Ico>
                Auto
              </ComboField>
              <ComboArrow><Drop /></ComboArrow>
            </Combo>
            <Strip origin={518} end={589} items={B2} />
            <Combo $w={69}>
              <ComboField>
                <Ico viewBox="0 0 16 16">{ICONS.solid}</Ico>
                By Comp
              </ComboField>
              <ComboArrow><Drop /></ComboArrow>
            </Combo>
            <Strip origin={658} end={800} items={B3} />
          </BottomTools>
          <Panel>
            <RadioCol>
              <RadioRow><Dot />plates</RadioRow>
              <RadioRow><Dot $on />solids</RadioRow>
            </RadioCol>
            <ElemsBtn>elems</ElemsBtn>
            <FirstBtn>
              <svg width="10" height="8"><path d="M1 0h2v8H1zM9 0v8L4 4z" fill="#111" /></svg>
            </FirstBtn>
            <IterBtn>iterations =</IterBtn>
            <ValueField>1 1 1 1</ValueField>
            <ActionCol>
              <Action $tone="on">smooth</Action>
              <Action $tone="off">reject</Action>
              <Action $tone="red" $push>return</Action>
            </ActionCol>
          </Panel>
        </RightCol>
      </Main>
      <Status>
        <StatusMsg>131072 elements added.</StatusMsg>
        <StatusCell $w={83} />
        <StatusCell $w={96}><Swatch />auto1</StatusCell>
        <StatusCell $w={91} />
      </Status>
    </Frame>
  );
}
